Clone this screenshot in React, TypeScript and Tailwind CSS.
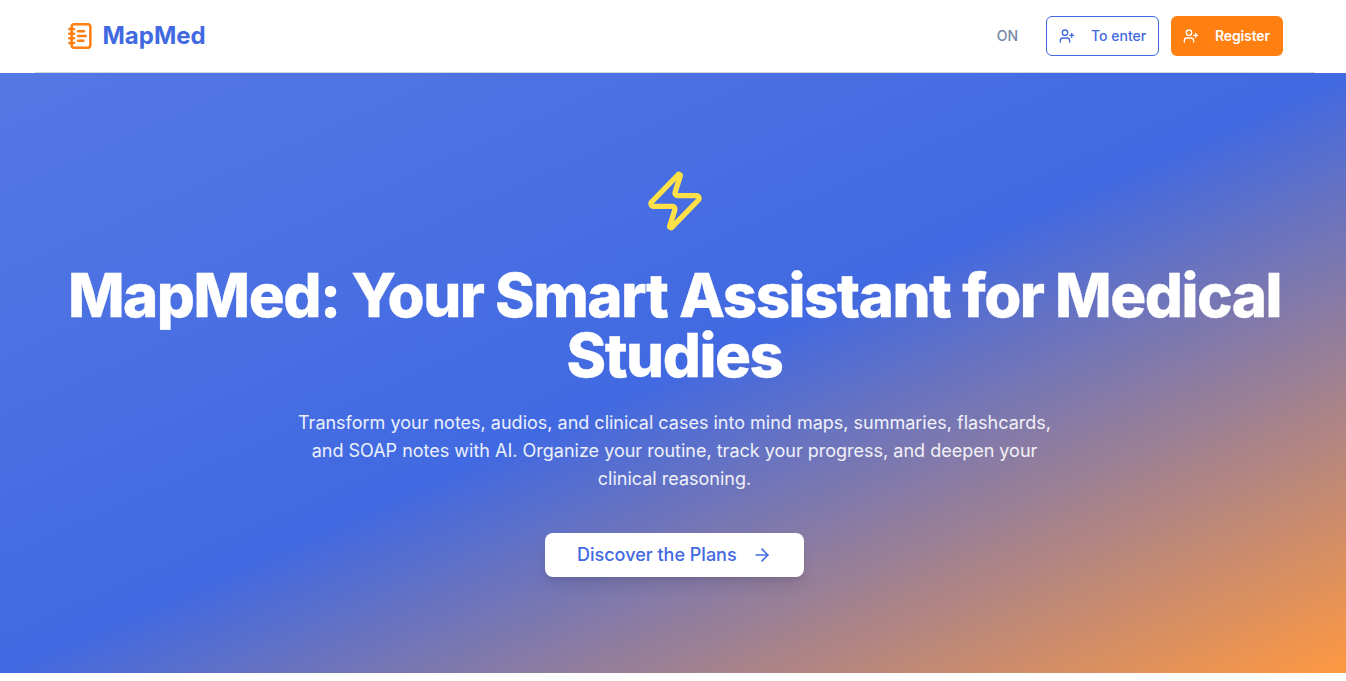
import { ArrowRight, NotebookText, UserPlus, Zap } from "lucide-react";

const Header = () => {
  return (
    <header className="bg-white w-full">
      <div className="mx-auto w-[1280px] h-[73px] px-8 flex items-center justify-between border-b border-[#d3d7de]">
        <div className="flex items-center gap-2">
          <NotebookText className="size-7 text-[#ff7f11]" strokeWidth={2.2} />
          <span className="text-2xl font-bold text-[#4169e1]">MapMed</span>
        </div>

        <div className="flex items-center gap-3">
          <span className="text-sm font-medium text-[#7588a3] mr-[15.5px]">
            ON
          </span>
          <button className="h-10 w-[113px] px-3 flex items-center gap-[16.5px] rounded-md border border-[#4169e1] text-sm font-medium text-[#4169e1] whitespace-nowrap">
            <UserPlus className="size-4 shrink-0" />
            To enter
          </button>
          <button className="h-10 w-28 px-3 flex items-center gap-[16.5px] rounded-md bg-[#ff7f11] text-sm font-semibold tracking-[-0.01em] text-white whitespace-nowrap">
            <UserPlus className="size-4 shrink-0" />
            Register
          </button>
        </div>
      </div>
    </header>
  );
};

const Hero = () => {
  return (
    <section className="bg-linear-to-br/srgb from-[#4169e1]/90 via-[#4169e1] to-[#ff7f11]/80 py-24">
      <div className="mx-auto w-[1280px] px-8 flex flex-col items-center text-center">
        <Zap className="size-16 text-[#ffe047] mb-8" />
        <h1 className="text-6xl leading-none font-extrabold tracking-tight text-white mb-6 [-webkit-text-stroke:0.3px_white]">
          MapMed: Your Smart Assistant for Medical Studies
        </h1>
        <p className="max-w-3xl text-lg leading-7 text-white/90 mb-10">
          Transform your notes, audios, and clinical cases into mind maps,
          summaries, flashcards, and SOAP notes with AI. Organize your routine,
          track your progress, and deepen your clinical reasoning.
        </p>
        <button className="h-11 w-[259px] px-8 flex items-center justify-between rounded-lg bg-white text-lg font-medium text-[#4169e1] whitespace-nowrap shadow-lg">
          Discover the Plans
          <ArrowRight className="size-5" />
        </button>
      </div>
    </section>
  );
};

const App = () => {
  return (
    <div className="w-full h-[681px] overflow-hidden bg-white font-['Inter',sans-serif]">
      {/* the page is slightly wider than the window */}
      <div className="w-[1349px]">
        <Header />
        <Hero />
      </div>
    </div>
  );
};

export default App;
